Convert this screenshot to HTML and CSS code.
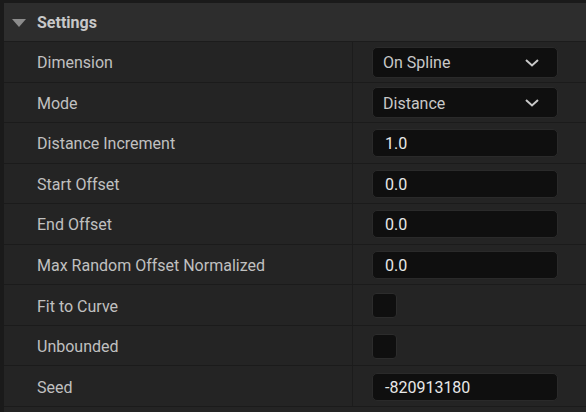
FILE: index.html
```html
<!DOCTYPE html>
<html lang="en">
<head>
    <meta charset="UTF-8">
    <title>Settings</title>
    <link rel="stylesheet" href="styles.css">
</head>
<body>
    <div class="panel">
        <div class="header">
            <svg class="caret" width="14" height="8" viewBox="0 0 14 8"><path d="M0 0 H14 L7 8 Z" fill="#8c8c8c"/></svg>
            <span>Settings</span>
        </div>

        <div class="row">
            <div class="label">Dimension</div>
            <div class="value">
                <div class="combo"><span>On Spline</span>
                    <svg width="14" height="8" viewBox="0 0 14 8"><path d="M1 1 L7 6.5 L13 1" fill="none" stroke="#c8c8c8" stroke-width="2"/></svg>
                </div>
            </div>
        </div>
        <div class="row">
            <div class="label">Mode</div>
            <div class="value">
                <div class="combo"><span>Distance</span>
                    <svg width="14" height="8" viewBox="0 0 14 8"><path d="M1 1 L7 6.5 L13 1" fill="none" stroke="#c8c8c8" stroke-width="2"/></svg>
                </div>
            </div>
        </div>
        <div class="row">
            <div class="label">Distance Increment</div>
            <div class="value"><div class="num">1.0</div></div>
        </div>
        <div class="row">
            <div class="label">Start Offset</div>
            <div class="value"><div class="num">0.0</div></div>
        </div>
        <div class="row">
            <div class="label">End Offset</div>
            <div class="value"><div class="num">0.0</div></div>
        </div>
        <div class="row">
            <div class="label">Max Random Offset Normalized</div>
            <div class="value"><div class="num">0.0</div></div>
        </div>
        <div class="row">
            <div class="label">Fit to Curve</div>
            <div class="value"><div class="check"></div></div>
        </div>
        <div class="row">
            <div class="label">Unbounded</div>
            <div class="value"><div class="check"></div></div>
        </div>
        <div class="row">
            <div class="label">Seed</div>
            <div class="value"><div class="num">-820913180</div></div>
        </div>
        <div class="row-end"></div>
    </div>
</body>
</html>
```

FILE: styles.css
```css
body {
    margin: 0;
    background: #1a1a1a;
    font-family: Roboto, "Liberation Sans", sans-serif;
    font-size: 16px;
    color: #c0c0c0;
    overflow: hidden;
}
.panel {
    margin-left: 4px;
    padding-top: 3px;
}
.header {
    height: 39px;
    box-sizing: border-box;
    border-bottom: 1px solid #1c1c1c;
    background: #2d2d2d;
    display: flex;
    align-items: center;
    padding-left: 8px;
    padding-top: 1px;
    font-weight: bold;
    color: #c8c8c8;
}
.caret {
    margin-right: 11px;
}
.row {
    height: 40.56px;
    box-sizing: border-box;
    border-bottom: 1px solid #1b1b1b;
    background: #242424;
    display: grid;
    grid-template-columns: 349px 1fr;
}
.row-end {
    height: 5px;
    background: #242424;
}
.label {
    padding-left: 33px;
    padding-top: 2px;
    border-right: 1px solid #1c1c1c;
    display: flex;
    align-items: center;
}
.value {
    padding-left: 19px;
    padding-top: 1px;
    display: flex;
    align-items: center;
}
.combo, .num {
    width: 186px;
    box-sizing: border-box;
    background: #0f0f0f;
    border: 1px solid #2a2a2a;
    border-radius: 5px;
    display: flex;
    align-items: center;
}
.combo {
    height: 31px;
    padding: 1px 18px 0 10px;
    justify-content: space-between;
    color: #c8c8c8;
}
.num {
    height: 28px;
    padding: 1px 0 0 12px;
    color: #e8e8e8;
}
.check {
    width: 25px;
    height: 25px;
    box-sizing: border-box;
    background: #0f0f0f;
    border: 1px solid #2c2c2c;
    border-radius: 4px;
}
```
